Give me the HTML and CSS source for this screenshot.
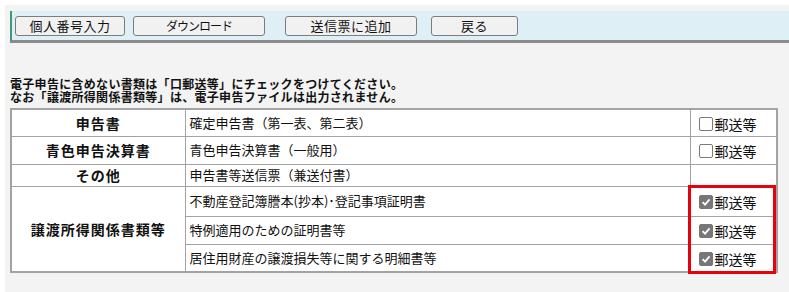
FILE: index.html
```html
<!DOCTYPE html>
<html lang="ja">
<head>
    <meta charset="UTF-8">
    <title>送信票</title>
    <link rel="stylesheet" href="styles.css">
</head>
<body>
    <div class="page">
        <div class="toolbar">
            <button class="btn btn-id">個人番号入力</button>
            <button class="btn btn-dl">ダウンロード</button>
            <button class="btn btn-add">送信票に追加</button>
            <button class="btn btn-back">戻る</button>
        </div>

        <p class="notice">電子申告に含めない書類は「口郵送等」にチェックをつけてください。<br>なお「譲渡所得関係書類等」は、電子申告ファイルは出力されません。</p>

        <div class="doc-wrap">
            <table class="doc-table">
                <colgroup>
                    <col class="c-kind">
                    <col class="c-name">
                    <col class="c-post">
                </colgroup>
                <tr class="r1">
                    <th>申告書</th>
                    <td>確定申告書（第一表、第二表）</td>
                    <td><span class="post"><span class="cb"></span>郵送等</span></td>
                </tr>
                <tr class="r2">
                    <th>青色申告決算書</th>
                    <td>青色申告決算書（一般用）</td>
                    <td><span class="post"><span class="cb"></span>郵送等</span></td>
                </tr>
                <tr class="r3">
                    <th>その他</th>
                    <td>申告書等送信票（兼送付書）</td>
                    <td></td>
                </tr>
                <tr class="r4">
                    <th rowspan="3">譲渡所得関係書類等</th>
                    <td>不動産登記簿謄本(抄本)･登記事項証明書</td>
                    <td><span class="post"><span class="cb on"><svg viewBox="0 0 12 12" width="12" height="12"><path d="M2.6 6.2L5 8.6L9.6 3.4" stroke="#fff" stroke-width="1.8" fill="none"/></svg></span>郵送等</span></td>
                </tr>
                <tr class="r5">
                    <td>特例適用のための証明書等</td>
                    <td><span class="post"><span class="cb on"><svg viewBox="0 0 12 12" width="12" height="12"><path d="M2.6 6.2L5 8.6L9.6 3.4" stroke="#fff" stroke-width="1.8" fill="none"/></svg></span>郵送等</span></td>
                </tr>
                <tr class="r6">
                    <td>居住用財産の譲渡損失等に関する明細書等</td>
                    <td><span class="post"><span class="cb on"><svg viewBox="0 0 12 12" width="12" height="12"><path d="M2.6 6.2L5 8.6L9.6 3.4" stroke="#fff" stroke-width="1.8" fill="none"/></svg></span>郵送等</span></td>
                </tr>
            </table>
            <div class="mark"></div>
        </div>
    </div>
</body>
</html>
```

FILE: styles.css
```css
body {
    margin: 0;
    background: #ffffff;
    font-family: "Noto Sans CJK JP", "Noto Sans", sans-serif;
    color: #111;
}

.page {
    margin: 5px 0 0 5px;
    padding: 6px 0 0 5px;
    background: #f3f3f3;
    min-height: 287px;
    box-sizing: border-box;
}

.toolbar {
    height: 24px;
    background: #dfeff6;
    border-left: 2px solid #3f9a78;
    border-bottom: 3px solid #8c8c8c;
    display: flex;
    align-items: flex-start;
    padding: 5px 0 0 3px;
}

.btn {
    height: 20px;
    padding: 0;
    background: #f1f1f1;
    border: 1px solid #7d7d7d;
    border-radius: 3px;
    font-family: inherit;
    font-size: 13px;
    line-height: 18px;
    color: #111;
    letter-spacing: 0.5px;
}

.btn-id { width: 110px; }
.btn-dl { width: 132px; margin-left: 8px; font-size: 12px; letter-spacing: -1px; }
.btn-add { width: 132px; margin-left: 20px; }
.btn-back { width: 87px; margin-left: 14px; }

.notice {
    margin: 34px 0 5px 0;
    font-size: 12px;
    line-height: 13px;
    font-weight: bold;
    letter-spacing: 0.3px;
}

.doc-wrap {
    position: relative;
    width: 766px;
}

.doc-table {
    width: 766px;
    table-layout: fixed;
    border-collapse: collapse;
    background: #fff;
    border: 2px solid #a3a3a3;
    font-size: 13px;
    line-height: 16px;
}

.c-kind { width: 174px; }
.c-name { width: 505px; }
.c-post { width: 87px; }

.doc-table th,
.doc-table td {
    border: 1px solid #a3a3a3;
    padding: 0 0 0 4px;
    vertical-align: middle;
    white-space: nowrap;
}

.doc-table th {
    padding: 0;
    font-size: 14px;
    font-weight: bold;
    letter-spacing: 1px;
}

.r1 { height: 27px; }
.r2 { height: 28px; }
.r3 { height: 22px; }
.r4 { height: 30px; }
.r5 { height: 28px; }
.r6 { height: 28px; }

.post {
    display: flex;
    align-items: center;
    gap: 2px;
    padding-left: 4px;
    padding-top: 2px;
    font-size: 14px;
}

.cb {
    width: 12px;
    height: 12px;
    border: 1px solid #7a7a7a;
    border-radius: 2px;
    background: #fff;
    display: inline-block;
}

.cb.on {
    background: #777;
    border-color: #777;
}

.cb svg {
    display: block;
    width: 12px;
    height: 12px;
}

.mark {
    position: absolute;
    left: 678px;
    top: 77px;
    width: 88px;
    height: 89px;
    border: 3px solid #e8000b;
    box-sizing: border-box;
}
```
